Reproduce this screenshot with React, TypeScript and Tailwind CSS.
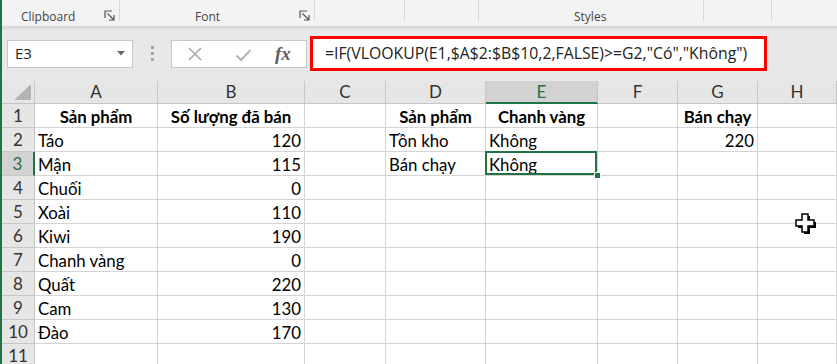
import React from "react";

type Cell = { v?: string; align?: "l" | "r" | "c"; bold?: boolean };

const letters = ["A", "B", "C", "D", "E", "F", "G", "H"];

const rows: Cell[][] = [
  [
    { v: "Sản phẩm", align: "c", bold: true },
    { v: "Số lượng đã bán", align: "c", bold: true },
    {},
    { v: "Sản phẩm", align: "c", bold: true },
    { v: "Chanh vàng", align: "c", bold: true },
    {},
    { v: "Bán chạy", align: "c", bold: true },
    {},
  ],
  [{ v: "Táo" }, { v: "120", align: "r" }, {}, { v: "Tồn kho" }, { v: "Không" }, {}, { v: "220", align: "r" }, {}],
  [{ v: "Mận" }, { v: "115", align: "r" }, {}, { v: "Bán chạy" }, { v: "Không" }, {}, {}, {}],
  [{ v: "Chuối" }, { v: "0", align: "r" }, {}, {}, {}, {}, {}, {}],
  [{ v: "Xoài" }, { v: "110", align: "r" }, {}, {}, {}, {}, {}, {}],
  [{ v: "Kiwi" }, { v: "190", align: "r" }, {}, {}, {}, {}, {}, {}],
  [{ v: "Chanh vàng" }, { v: "0", align: "r" }, {}, {}, {}, {}, {}, {}],
  [{ v: "Quất" }, { v: "220", align: "r" }, {}, {}, {}, {}, {}, {}],
  [{ v: "Cam" }, { v: "130", align: "r" }, {}, {}, {}, {}, {}, {}],
  [{ v: "Đào" }, { v: "170", align: "r" }, {}, {}, {}, {}, {}, {}],
  [{}, {}, {}, {}, {}, {}, {}, {}],
];

function Launcher() {
  return (
    <svg width="11" height="11" viewBox="0 0 11 11" className="text-[#555]">
      <path d="M1 8V1h7" fill="none" stroke="currentColor" strokeWidth="1.2" />
      <path d="M3.5 3.5l6 6M10 5v5H5" fill="none" stroke="currentColor" strokeWidth="1.2" />
    </svg>
  );
}

function Group({ className, label, launcher, labelClass }: { className: string; label?: string; launcher?: boolean; labelClass?: string }) {
  return (
    <div className={`flex h-full shrink-0 ${className}`}>
      <div className="relative flex-1 flex items-end pb-[3px]">
        {label && <span className={`text-[12px] text-[#444] leading-none ${labelClass ?? ""}`}>{label}</span>}
        {launcher && (
          <span className="absolute right-[4px] top-[10px]">
            <Launcher />
          </span>
        )}
      </div>
      <div className="w-px h-[21px] bg-[#d6d6d6]" />
    </div>
  );
}

export default function App() {
  return (
    <div className="w-[837px] h-[364px] overflow-hidden relative bg-white border-l-2 border-[#217346]">
      {/* ribbon group labels */}
      <div className="h-[26px] bg-[#f3f3f3] flex font-['Open_Sans',sans-serif]">
        <Group className="w-[118px]" label="Clipboard" launcher labelClass="ml-[19px]" />
        <Group className="w-[195px]" label="Font" launcher labelClass="ml-[75px]" />
        <Group className="w-[90px]" />
        <Group className="w-[74px]" />
        <Group className="w-[225px]" label="Styles" labelClass="ml-[95px]" />
        <Group className="w-[68px]" />
        <div className="flex-1" />
      </div>

      {/* formula bar */}
      <div className="h-[55px] bg-[#e8e8e8] relative flex items-center font-['Open_Sans',sans-serif]">
        <div className="absolute top-0 left-0 right-0 h-[5px] bg-linear-to-b from-[#d4d4d4] to-[#e8e8e8]" />
        <div className="ml-[5px] w-[126px] h-[28px] bg-white border border-[#c8c8c8] flex items-center justify-between pl-[7px] pr-[7px]">
          <span className="text-[15px] text-[#222]">E3</span>
          <svg width="8" height="5" viewBox="0 0 8 5">
            <path d="M0 0h8L4 4.5z" fill="#666" />
          </svg>
        </div>
        <div className="w-[38px] flex flex-col items-center gap-[3px]">
          <div className="w-[3px] h-[3px] bg-[#a6a6a6]" />
          <div className="w-[3px] h-[3px] bg-[#a6a6a6]" />
          <div className="w-[3px] h-[3px] bg-[#a6a6a6]" />
        </div>
        <div className="w-[136px] h-[28px] bg-white border border-[#c8c8c8] flex items-center pl-[15px]">
          <svg width="16" height="16" viewBox="0 0 16 16">
            <path d="M2 2l12 12M14 2L2 14" stroke="#a9a9a9" strokeWidth="1.6" />
          </svg>
          <svg width="17" height="14" viewBox="0 0 17 14" className="ml-[32px] mt-[3px]">
            <path d="M1.5 7.5l4.5 4.5 9.5-10" fill="none" stroke="#b5b5b5" strokeWidth="2" />
          </svg>
          <span className="ml-[23px] text-[19px] italic font-bold text-[#606060] leading-[24px] font-['Liberation_Serif',serif]">
            fx
          </span>
        </div>
        <div className="ml-[3px] w-[457px] h-[35px] bg-white border-[3px] border-[#ff0000] flex items-center pl-[12px]">
          <span className="text-[15.8px] text-[#222] whitespace-nowrap">
            =IF(VLOOKUP(E1,$A$2:$B$10,2,FALSE)&gt;=G2,"Có","Không")
          </span>
        </div>
      </div>

      {/* sheet grid */}
      <div className="grid grid-cols-[33px_123px_147px_81px_100px_112px_80px_80px_1fr] font-['Lato',sans-serif]">
        {/* corner */}
        <div className="h-[23px] bg-[#e6e6e6] border-r border-b border-[#c6c6c6] flex items-end justify-end pr-[3px] pb-[3px]">
          <svg width="17" height="16" viewBox="0 0 17 16">
            <path d="M17 0V16H0z" fill="#b4b4b4" />
          </svg>
        </div>
        {letters.map((l) =>
          l === "E" ? (
            <div
              key={l}
              className="h-[23px] bg-[#d2d2d2] border-r border-[#c6c6c6] border-b-2 border-b-[#217346] flex items-center justify-center text-[17px] text-[#217346]"
            >
              {l}
            </div>
          ) : (
            <div
              key={l}
              className="h-[23px] bg-[#e6e6e6] border-r border-b border-[#c6c6c6] flex items-center justify-center text-[17px] text-[#333]"
            >
              {l}
            </div>
          )
        )}
        {rows.map((r, ri) => (
          <React.Fragment key={ri}>
            {ri === 2 ? (
              <div className="h-[24px] bg-[#d2d2d2] border-b border-[#c6c6c6] border-r-2 border-r-[#217346] flex items-center justify-center text-[17px] text-[#217346]">
                {ri + 1}
              </div>
            ) : (
              <div className="h-[24px] bg-[#e6e6e6] border-r border-b border-[#c6c6c6] flex items-center justify-center text-[17px] text-[#333]">
                {ri + 1}
              </div>
            )}
            {r.map((c, ci) => {
              const selected = ri === 2 && ci === 4;
              return (
                <div
                  key={ci}
                  className={`h-[24px] border-r border-b border-[#d4d4d4] flex items-center px-[3px] pt-[2px] whitespace-nowrap text-[16.8px] text-black relative ${
                    c.align === "r" ? "justify-end" : c.align === "c" ? "justify-center" : "justify-start"
                  } ${c.bold ? "font-bold" : ""} ${selected ? "z-10" : ""}`}
                >
                  {c.v}
                  {selected && (
                    <>
                      <div className="absolute -left-px -top-px w-[calc(100%+1px)] h-[calc(100%+1px)] border-2 border-[#217346]" />
                      <div className="absolute -right-[4px] -bottom-[4px] w-[7px] h-[7px] bg-[#217346] border border-white" />
                    </>
                  )}
                </div>
              );
            })}
          </React.Fragment>
        ))}
      </div>

      {/* mouse cursor */}
      <svg width="24" height="24" viewBox="0 0 24 24" className="absolute left-[792px] top-[212px]">
        <polygon points="10,4 16,4 16,10 22,10 22,16 16,16 16,22 10,22 10,16 4,16 4,10 10,10" fill="#000" />
        <polygon
          points="8,2 14,2 14,8 20,8 20,14 14,14 14,20 8,20 8,14 2,14 2,8 8,8"
          fill="#fff"
          stroke="#000"
          strokeWidth="1.5"
        />
      </svg>
    </div>
  );
}
